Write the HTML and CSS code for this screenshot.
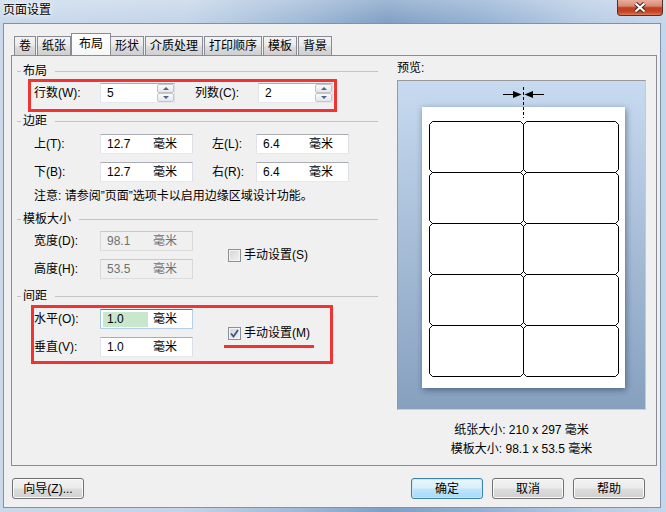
FILE: index.html
```html
<!DOCTYPE html>
<html>

<head>
	<meta charset="utf-8">
	<title>页面设置</title>
	<link rel="stylesheet" href="styles.css">
</head>

<body>
	<div class="window">
		<div class="titlebar">
			<span class="title">页面设置</span>
			<div class="close">
				<svg width="14" height="11" viewBox="0 0 14 11">
					<path d="M2.5 1.5 L11.5 9.5 M11.5 1.5 L2.5 9.5" stroke="#4a2620" stroke-width="4.2" fill="none" />
					<path d="M2.5 1.5 L11.5 9.5 M11.5 1.5 L2.5 9.5" stroke="#ffffff" stroke-width="2.2" fill="none" />
				</svg>
			</div>
		</div>

		<div class="client">
			<div class="tabs">
				<div class="tab">卷</div>
				<div class="tab">纸张</div>
				<div class="tab active">布局</div>
				<div class="tab">形状</div>
				<div class="tab">介质处理</div>
				<div class="tab">打印顺序</div>
				<div class="tab">模板</div>
				<div class="tab">背景</div>
			</div>

			<div class="panel">
				<div class="left">
					<div class="group g1"><span>布局</span></div>
					<div class="mark mark1">
						<div class="row">
							<span class="lbl">行数(W):</span>
							<div class="field spin">
								<span class="val">5</span>
								<div class="spinbtns"><i class="up"></i><i class="down"></i></div>
							</div>
							<span class="lbl lbl3">列数(C):</span>
							<div class="field spin">
								<span class="val">2</span>
								<div class="spinbtns"><i class="up"></i><i class="down"></i></div>
							</div>
						</div>
					</div>

					<div class="group g2"><span>边距</span></div>
					<div class="row indent r-top">
						<span class="lbl">上(T):</span>
						<div class="field"><span class="val">12.7</span><span>毫米</span></div>
						<span class="lbl lbl2">左(L):</span>
						<div class="field"><span class="val">6.4</span><span>毫米</span></div>
					</div>
					<div class="row indent r-next">
						<span class="lbl">下(B):</span>
						<div class="field"><span class="val">12.7</span><span>毫米</span></div>
						<span class="lbl lbl2">右(R):</span>
						<div class="field"><span class="val">6.4</span><span>毫米</span></div>
					</div>
					<div class="note indent">注意: 请参阅”页面”选项卡以启用边缘区域设计功能。</div>

					<div class="group g3"><span>模板大小</span></div>
					<div class="pair indent size">
						<div class="rows">
							<div class="row">
								<span class="lbl">宽度(D):</span>
								<div class="field off"><span class="val">98.1</span><span>毫米</span></div>
							</div>
							<div class="row r-next">
								<span class="lbl">高度(H):</span>
								<div class="field off"><span class="val">53.5</span><span>毫米</span></div>
							</div>
						</div>
						<div class="check check-s">
							<span class="chk"></span>
							<span>手动设置(S)</span>
						</div>
					</div>

					<div class="group g4"><span>间距</span></div>
					<div class="mark mark2">
						<div class="pair">
							<div class="rows">
								<div class="row">
									<span class="lbl">水平(O):</span>
									<div class="field focus"><span class="val"><span class="hl">1.0</span></span><span>毫米</span></div>
								</div>
								<div class="row r-next">
									<span class="lbl">垂直(V):</span>
									<div class="field"><span class="val">1.0</span><span>毫米</span></div>
								</div>
							</div>
							<div class="checkcol">
								<div class="check">
									<span class="chk">
										<svg width="9" height="9" viewBox="0 0 9 9">
											<path d="M1 4.5 L3.5 7.5 L8 1" stroke="#3f5488" stroke-width="1.8" fill="none" />
										</svg>
									</span>
									<span>手动设置(M)</span>
								</div>
								<div class="underline"></div>
							</div>
						</div>
					</div>
				</div>

				<div class="preview">
					<div class="pvlabel">预览:</div>
					<div class="pvbox">
						<svg width="247" height="328" viewBox="0 0 247 328">
							<defs>
								<linearGradient id="pvbg" x1="0" y1="0" x2="0" y2="1">
									<stop offset="0" stop-color="#c7daf0" />
									<stop offset="1" stop-color="#86a0be" />
								</linearGradient>
								<filter id="sh" x="-20%" y="-20%" width="140%" height="140%">
									<feDropShadow dx="1" dy="2" stdDeviation="3" flood-color="#1c3050" flood-opacity="0.55" />
								</filter>
							</defs>
							<rect width="247" height="328" fill="url(#pvbg)" />
							<rect x="24" y="26" width="203" height="281" fill="#ffffff" filter="url(#sh)" />
							<g fill="none" stroke="#000" stroke-width="1">
								<polygon points="34.5,40.5 122.5,40.5 125.5,43.5 125.5,88.5 122.5,91.5 34.5,91.5 31.5,88.5 31.5,43.5" />
								<polygon points="128.5,40.5 217.5,40.5 220.5,43.5 220.5,88.5 217.5,91.5 128.5,91.5 125.5,88.5 125.5,43.5" />
								<polygon points="34.5,91.5 122.5,91.5 125.5,94.5 125.5,139.5 122.5,142.5 34.5,142.5 31.5,139.5 31.5,94.5" />
								<polygon points="128.5,91.5 217.5,91.5 220.5,94.5 220.5,139.5 217.5,142.5 128.5,142.5 125.5,139.5 125.5,94.5" />
								<polygon points="34.5,142.5 122.5,142.5 125.5,145.5 125.5,190.5 122.5,193.5 34.5,193.5 31.5,190.5 31.5,145.5" />
								<polygon points="128.5,142.5 217.5,142.5 220.5,145.5 220.5,190.5 217.5,193.5 128.5,193.5 125.5,190.5 125.5,145.5" />
								<polygon points="34.5,193.5 122.5,193.5 125.5,196.5 125.5,241.5 122.5,244.5 34.5,244.5 31.5,241.5 31.5,196.5" />
								<polygon points="128.5,193.5 217.5,193.5 220.5,196.5 220.5,241.5 217.5,244.5 128.5,244.5 125.5,241.5 125.5,196.5" />
								<polygon points="34.5,244.5 122.5,244.5 125.5,247.5 125.5,292.5 122.5,295.5 34.5,295.5 31.5,292.5 31.5,247.5" />
								<polygon points="128.5,244.5 217.5,244.5 220.5,247.5 220.5,292.5 217.5,295.5 128.5,295.5 125.5,292.5 125.5,247.5" />
								<path d="M125.5 6 V37" stroke-dasharray="3 2" />
								<path d="M105 13.5 H116 M146 13.5 H135" />
							</g>
							<polygon points="115,10 123.5,13.5 115,17" fill="#000" />
							<polygon points="135,10 126.5,13.5 135,17" fill="#000" />
						</svg>
					</div>
					<div class="pvtext t1">纸张大小: 210 x 297 毫米</div>
					<div class="pvtext t2">模板大小: 98.1 x 53.5 毫米</div>
				</div>
			</div>

			<div class="buttons">
				<button class="btn wizard">向导(Z)...</button>
				<button class="btn default">确定</button>
				<button class="btn">取消</button>
				<button class="btn">帮助</button>
			</div>
		</div>
	</div>
</body>

</html>
```

FILE: styles.css
```css
body {
	margin: 0;
	width: 666px;
	height: 512px;
	overflow: hidden;
	font-family: "Liberation Sans", "Noto Sans CJK SC", sans-serif;
	font-size: 12px;
	line-height: 14px;
	color: #000;
}

.window {
	width: 666px;
	height: 512px;
	box-sizing: border-box;
	padding: 0 5px 4px 3px;
	display: flex;
	flex-direction: column;
	background:
		linear-gradient(rgba(255, 255, 255, 0.25), rgba(255, 255, 255, 0) 24px),
		linear-gradient(90deg, #c9d9eb 0%, #c3d4e8 28%, #9fb9d6 45%, #7f9fc5 58%, #93b0d2 72%, #b7cce4 88%, #c4d6ea 100%);
}

.titlebar {
	height: 23px;
	display: flex;
	align-items: flex-start;
	flex-shrink: 0;
}

.title {
	margin-top: 3px;
	text-shadow: 0 0 6px #ffffff, 0 0 3px #ffffff;
}

.close {
	margin-left: auto;
	margin-right: -2px;
	width: 46px;
	height: 16px;
	box-sizing: border-box;
	border: 1px solid #5e2a22;
	border-top: none;
	border-radius: 0 0 4px 4px;
	background: linear-gradient(#e9ad9c, #d88a74 40%, #c0401f 52%, #c44626 80%, #e07b5c);
	display: flex;
	align-items: center;
	justify-content: center;
}

.client {
	flex: 1;
	background: #f0f0f0;
	border: 1px solid #7e92aa;
	padding: 9px 3px 0 7px;
	display: flex;
	flex-direction: column;
}

/* tabs */

.tabs {
	display: flex;
	align-items: flex-start;
	height: 22px;
	padding-left: 3px;
}

.tab {
	height: 19px;
	margin-top: 3px;
	margin-right: 1px;
	padding: 0 4px;
	box-sizing: border-box;
	border: 1px solid #898c95;
	border-bottom: none;
	line-height: 18px;
	background: linear-gradient(#f3f3f3, #ebebeb 45%, #dddddd 55%, #cfcfcf);
}

.tab.active {
	height: 23px;
	margin-top: 0;
	margin-left: -1px;
	margin-right: -1px;
	margin-bottom: -1px;
	padding: 2px 7px 0;
	line-height: 16px;
	background: linear-gradient(#ffffff, #f6f6f6);
}

.panel {
	height: 411px;
	box-sizing: border-box;
	border: 1px solid #898c95;
	background: #f0f0f0;
	display: flex;
}

/* left column */

.left {
	width: 366px;
	display: flex;
	flex-direction: column;
}

.group {
	display: flex;
	align-items: center;
	height: 14px;
	padding-left: 5px;
}

.group::before {
	content: "";
	width: 4px;
	height: 1px;
	margin-right: 2px;
	background: #c4c4c4;
}

.group::after {
	content: "";
	flex: 1;
	height: 1px;
	margin-left: 8px;
	background: #c4c4c4;
}

.g1 {
	margin-top: 8px;
}

.g2 {
	margin-top: 2px;
}

.g3 {
	margin-top: 9px;
}

.g4 {
	margin-top: 10px;
}

.mark {
	border: 3px solid #f03434;
	box-sizing: border-box;
}

.mark1 {
	margin: 1px 0 0 16px;
	width: 309px;
	height: 33px;
	padding: 1px 0 0 3px;
}

.mark2 {
	margin: 2px 0 0 19px;
	width: 302px;
	height: 59px;
	padding-top: 1px;
}

.row {
	display: flex;
	align-items: center;
}

.indent {
	margin-left: 22px;
}

.r-top {
	margin-top: 6px;
}

.r-next {
	margin-top: 8px;
}

.lbl {
	width: 66px;
	flex-shrink: 0;
}

.lbl2 {
	width: 44px;
	margin-left: 19px;
}

.lbl3 {
	width: 63px;
	margin-left: 20px;
}

.note {
	margin-top: 7px;
}

.size {
	margin-top: 5px;
}

/* fields */

.field {
	width: 93px;
	height: 20px;
	box-sizing: border-box;
	border: 1px solid;
	border-color: #abadb3 #dbdfe6 #e3e9ef #e2e3ea;
	background: #ffffff;
	display: flex;
	align-items: center;
	flex-shrink: 0;
}

.val {
	width: 52px;
	padding-left: 6px;
	box-sizing: border-box;
}

.field.off {
	background: #f0f0f0;
	color: #707070;
	border-color: #c9c9c9 #d9d9d9 #dcdcdc #d9d9d9;
}

.field.focus {
	border-color: #3d7bad #b5cfe7 #b5cfe7 #a4c9e3;
}

.field.focus .val {
	padding-left: 2px;
}

.hl {
	display: block;
	width: 45px;
	height: 15px;
	line-height: 15px;
	padding-left: 4px;
	box-sizing: border-box;
	background: #c9e7cc;
}

.field.spin {
	width: 75px;
}

.field.spin .val {
	flex: 1;
}

.spinbtns {
	display: flex;
	flex-direction: column;
	width: 17px;
	height: 18px;
}

.spinbtns i {
	height: 9px;
	box-sizing: border-box;
	border: 1px solid #c2c4c8;
	border-radius: 2px;
	background: linear-gradient(#fbfbfb, #e4e6ea);
	display: flex;
	align-items: center;
	justify-content: center;
}

.spinbtns .up::after {
	content: "";
	border-left: 3px solid transparent;
	border-right: 3px solid transparent;
	border-bottom: 3px solid #4c6290;
}

.spinbtns .down::after {
	content: "";
	border-left: 3px solid transparent;
	border-right: 3px solid transparent;
	border-top: 3px solid #4c6290;
}

/* checkboxes */

.pair {
	display: flex;
}

.rows {
	display: flex;
	flex-direction: column;
}

.check {
	display: flex;
	align-items: center;
}

.check-s {
	margin-left: 35px;
}

.checkcol {
	margin: 17px 0 0 35px;
	display: flex;
	flex-direction: column;
}

.chk {
	width: 13px;
	height: 13px;
	margin-right: 3px;
	box-sizing: border-box;
	border: 1px solid #8e8f8f;
	background: linear-gradient(135deg, #d3d5d8, #f2f2f2);
	box-shadow: inset 0 0 0 1px #f4f4f4;
	display: flex;
	align-items: center;
	justify-content: center;
}

.underline {
	width: 90px;
	height: 3px;
	margin: 5px 0 0 -4px;
	background: #f03434;
}

/* preview */

.preview {
	margin-left: 19px;
	width: 249px;
	display: flex;
	flex-direction: column;
}

.pvlabel {
	margin-top: 5px;
}

.pvbox {
	margin-top: 5px;
	width: 249px;
	height: 330px;
	box-sizing: border-box;
	border: 1px solid;
	border-color: #999999 #c9c9c9 #d0d0d0 #999999;
}

.pvbox svg {
	display: block;
}

.pvtext {
	text-align: center;
}

.t1 {
	margin-top: 13px;
}

.t2 {
	margin-top: 5px;
}

/* buttons */

.buttons {
	display: flex;
	gap: 9px;
	margin-top: 12px;
	padding: 0 12px 0 1px;
}

.btn {
	width: 72px;
	height: 21px;
	padding: 0;
	font: inherit;
	color: #000;
	border: 1px solid #707070;
	border-radius: 3px;
	background: linear-gradient(#f2f2f2, #ebebeb 48%, #dddddd 52%, #cfcfcf);
	box-shadow: inset 0 0 0 1px #fbfbfb;
}

.btn.wizard {
	margin-right: auto;
}

.btn.default {
	border-color: #3c7fb1;
	background: linear-gradient(#eaf6fd, #d9f0fc 48%, #bee6fd 52%, #a7d9f5);
	box-shadow: inset 0 0 0 1px #c9e9fb;
}
```
